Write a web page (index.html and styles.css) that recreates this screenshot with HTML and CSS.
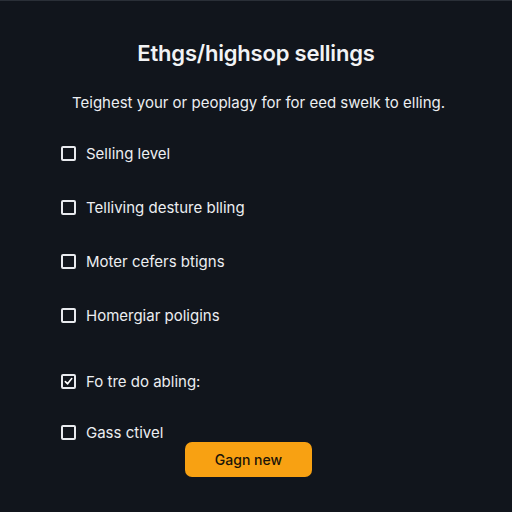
FILE: index.html
```html
<!DOCTYPE html>
<html lang="en">
<head>
<meta charset="utf-8">
<title>Ethgs/highsop sellings</title>
<link rel="stylesheet" href="styles.css">
</head>
<body>
<main class="panel">
  <h1 class="title">Ethgs/highsop sellings</h1>
  <p class="lead">Teighest your or peoplagy for for eed swelk to elling.</p>
  <ul class="options">
    <li class="option"><span class="box"></span>Selling level</li>
    <li class="option"><span class="box"></span>Telliving desture blling</li>
    <li class="option"><span class="box"></span>Moter cefers btigns</li>
    <li class="option option-break"><span class="box"></span>Homergiar poligins</li>
    <li class="option option-tight"><span class="box checked"><svg viewBox="0 0 10 10" width="9" height="9"><path d="M1.5 5.2 L4 7.6 L8.6 1.8" fill="none" stroke="#fff" stroke-width="1.8" stroke-linecap="round" stroke-linejoin="round"/></svg></span>Fo tre do abling:</li>
    <li class="option option-last"><span class="box"></span>Gass ctivel</li>
  </ul>
  <div class="actions"><button class="btn">Gagn new</button></div>
</main>
</body>
</html>
```

FILE: styles.css
```css
html, body {
  margin: 0;
  height: 100%;
  background: #11151c;
}
body {
  font-family: Inter, "Noto Sans", sans-serif;
  color: #f2f3f5;
}
.panel {
  height: 512px;
  box-sizing: border-box;
  padding-top: 37px;
  border-top: 1px solid #2a2f37;
}
.title {
  margin: 0;
  text-align: center;
  font-size: 22px;
  font-weight: 600;
  letter-spacing: -0.2px;
  line-height: 30px;
}
.lead {
  margin: 24px 0 0 72px;
  font-size: 15px;
  line-height: 22px;
  color: #eceef1;
}
.options {
  list-style: none;
  margin: 28px 0 0 61px;
  padding: 0;
}
.option {
  display: flex;
  align-items: center;
  gap: 10px;
  height: 22px;
  margin-bottom: 32px;
  font-size: 15px;
  color: #eceef1;
}
.option-break {
  margin-bottom: 44px;
}
.option-tight {
  margin-bottom: 29px;
}
.option-last {
  margin-bottom: 0;
}
.box {
  width: 11px;
  height: 11px;
  border: 2px solid #e8eaee;
  border-radius: 2px;
  display: inline-flex;
  align-items: center;
  justify-content: center;
  flex: none;
}
.actions {
  margin: -1px 0 0 185px;
}
.btn {
  width: 127px;
  height: 35px;
  border: none;
  border-radius: 7px;
  background: #f8a112;
  color: #1a1408;
  font-family: Inter, "Noto Sans", sans-serif;
  font-size: 14px;
  font-weight: 500;
}
```
